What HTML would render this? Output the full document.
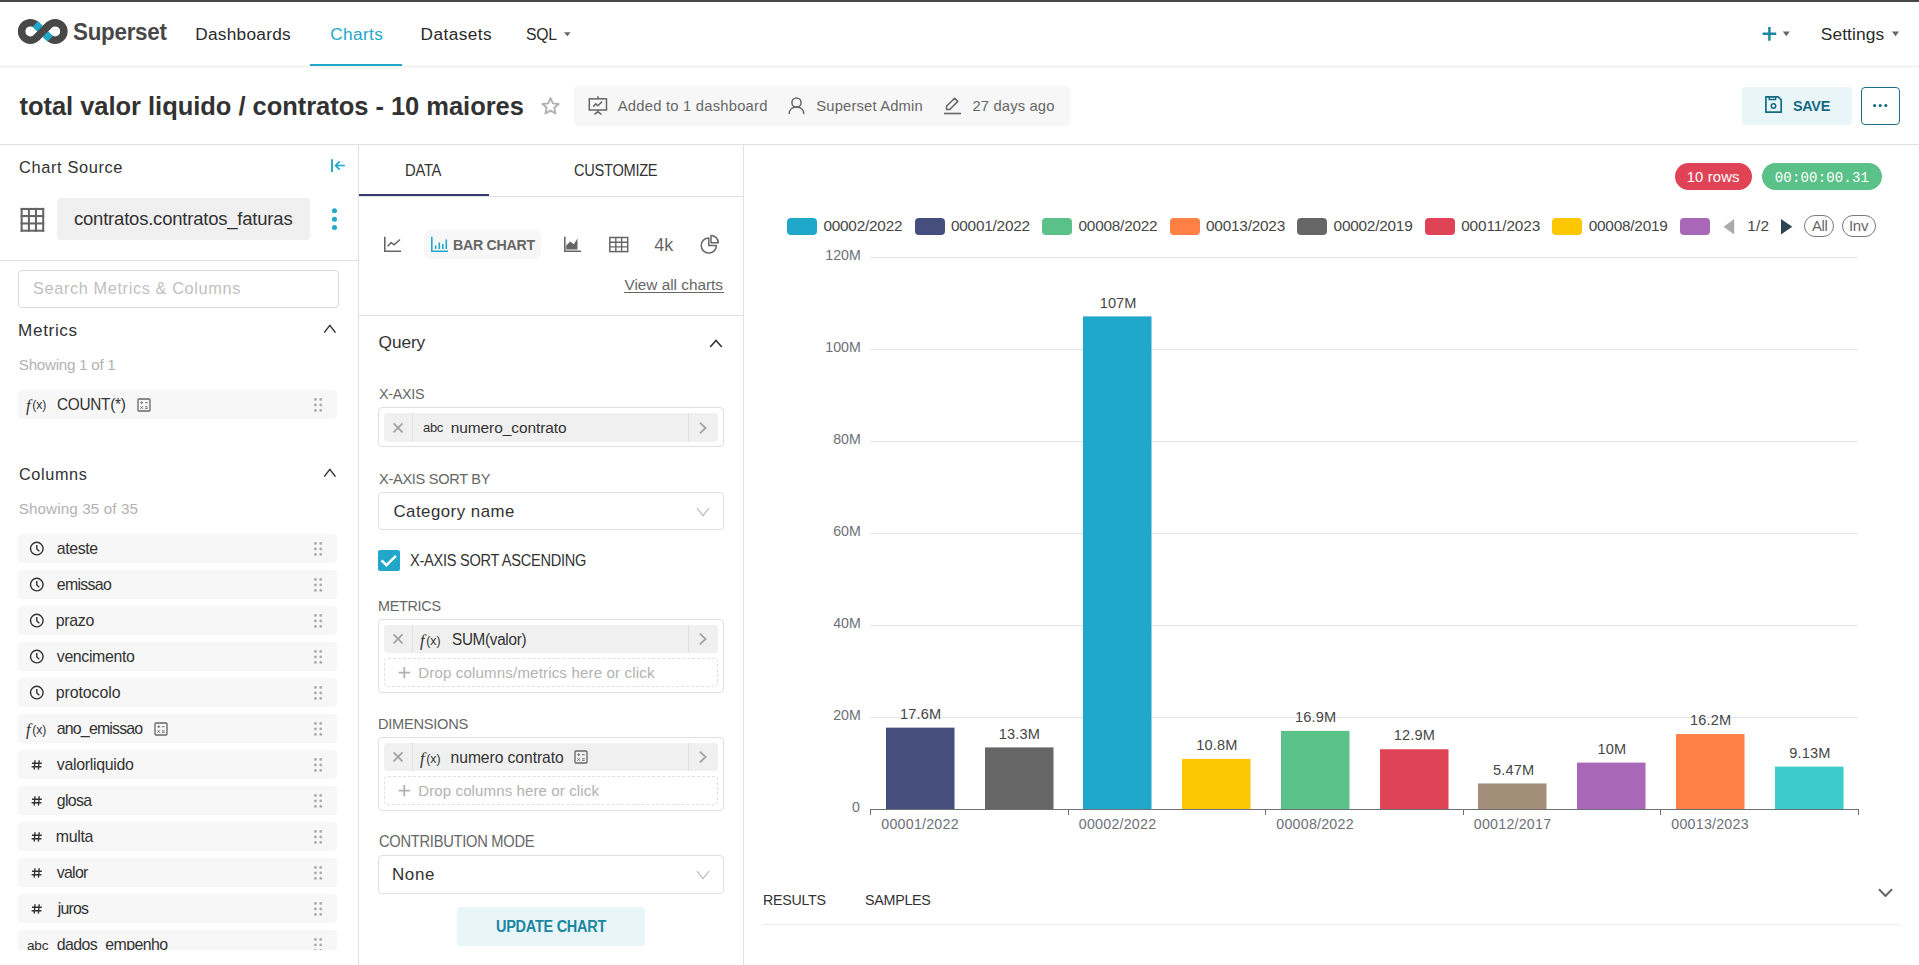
<!DOCTYPE html>
<html><head><meta charset="utf-8"><style>
html,body{margin:0;padding:0;background:#fff;}
body{width:1919px;height:965px;overflow:hidden;position:relative;font-family:"Liberation Sans",sans-serif;}
#root>div,#root>svg,#root>span{position:absolute;}
#root span{white-space:pre;}
#clip{position:absolute;left:0;top:0;width:358px;height:950px;overflow:hidden;}
</style></head><body><div id="root">
<div style="left:0px;top:0px;width:1919px;height:2px;background:#484848;"></div>
<div style="left:0px;top:65px;width:1919px;height:3px;background:#f5f5f5;"></div>
<div style="left:310px;top:64px;width:92px;height:2px;background:#20a7c9;"></div>
<svg style="left:0px;top:0px" width="80" height="60" viewBox="0 0 80 60">
<path d="M36.57 25.22 L48.93 37.58 A8.75 8.75 0 1 0 48.93 25.22 L36.57 37.58 A8.75 8.75 0 1 1 36.57 25.22 Z" fill="none" stroke="#484848" stroke-width="7.5" stroke-linejoin="round"/>
<path d="M35.3 23.95 L50.2 38.85" fill="none" stroke="#20a7c9" stroke-width="7.6"/>
<path d="M49.3 24.85 L36.2 37.95" fill="none" stroke="#484848" stroke-width="7.5"/>
</svg>
<svg style="left:563px;top:31px" width="9" height="6" viewBox="0 0 9 6"><path d="M1 1.2 L7.6 1.2 L4.3 5.2 Z" fill="#666"/></svg>
<svg style="left:1760px;top:25px" width="19" height="18" viewBox="0 0 19 18"><path d="M9.4 1.9 V15.7 M2.6 8.8 H16.2" stroke="#1a85a0" stroke-width="2.4" fill="none"/></svg>
<svg style="left:1782px;top:31px" width="9" height="6" viewBox="0 0 9 6"><path d="M0.8 0.6 L7.8 0.6 L4.3 5.2 Z" fill="#666"/></svg>
<svg style="left:1891px;top:31px" width="9" height="6" viewBox="0 0 9 6"><path d="M1 0.6 L8 0.6 L4.5 5.2 Z" fill="#666"/></svg>
<svg style="left:540px;top:96px" width="21" height="20" viewBox="0 0 21 20"><path d="M10.5 2.2 L12.9 7.4 L18.6 8 L14.3 11.8 L15.5 17.5 L10.5 14.6 L5.5 17.5 L6.7 11.8 L2.4 8 L8.1 7.4 Z" fill="none" stroke="#b2b2b2" stroke-width="1.9" stroke-linejoin="round"/></svg>
<div style="left:574px;top:86px;width:496px;height:40px;box-sizing:border-box;background:#f7f7f7;border-radius:4px"></div>
<svg style="left:587px;top:95px" width="22" height="22" viewBox="0 0 22 22"><rect x="2.3" y="3.85" width="17.2" height="11.15" fill="none" stroke="#666" stroke-width="1.5"/><path d="M10.9 1.3 V3.85 M10.9 15 V16.8 M7.4 19.4 L10.9 16.8 L14.4 19.4 M6.2 11.6 L8.9 8.9 L10.9 10.7 L15 6.6" fill="none" stroke="#666" stroke-width="1.5"/></svg>
<svg style="left:787px;top:96px" width="19" height="19" viewBox="0 0 19 19"><circle cx="9.5" cy="6.6" r="4.6" fill="none" stroke="#666" stroke-width="1.5"/><path d="M2.2 18 C2.2 13.5 5.5 11 9.5 11 C13.5 11 16.8 13.5 16.8 18" fill="none" stroke="#666" stroke-width="1.5"/></svg>
<svg style="left:942px;top:96px" width="21" height="19" viewBox="0 0 21 19"><path d="M4.5 13.5 L4.5 10.3 L12.6 2.2 L15.8 5.4 L7.7 13.5 Z" fill="none" stroke="#666" stroke-width="1.5" stroke-linejoin="round"/><path d="M2 17.5 H19" stroke="#666" stroke-width="1.6"/></svg>
<div style="left:1742px;top:87px;width:110px;height:38px;box-sizing:border-box;background:#e9f6f9;border-radius:4px"></div>
<svg style="left:1763px;top:95px" width="21" height="20" viewBox="0 0 21 20"><path d="M2.9 1.8 H15.2 L18.2 4.8 V17.2 H2.9 Z" fill="none" stroke="#156a82" stroke-width="1.7" stroke-linejoin="round"/><path d="M6.3 1.8 V4.6 H12.6 V1.8" fill="none" stroke="#156a82" stroke-width="1.5"/><circle cx="10.5" cy="11" r="2.2" fill="none" stroke="#156a82" stroke-width="1.5"/></svg>
<div style="left:1861px;top:87px;width:39px;height:38px;box-sizing:border-box;border:1px solid #1a6f87;border-radius:4px"></div>
<svg style="left:1870px;top:101px" width="20" height="9" viewBox="0 0 20 9"><circle cx="4.6" cy="4.5" r="1.6" fill="#156a82"/><circle cx="10.2" cy="4.5" r="1.6" fill="#156a82"/><circle cx="15.8" cy="4.5" r="1.6" fill="#156a82"/></svg>
<div style="left:0px;top:144px;width:1919px;height:1px;background:#e0e0e0;"></div>
<div style="left:358px;top:145px;width:1px;height:820px;background:#e0e0e0;"></div>
<div style="left:743px;top:145px;width:1px;height:820px;background:#e0e0e0;"></div>
<svg style="left:328px;top:156px" width="20" height="19" viewBox="0 0 20 19"><path d="M4 3.2 V15.9" stroke="#20a7c9" stroke-width="1.9"/><path d="M16.9 9.5 H7.6 M11.7 5.4 L7.6 9.5 L11.7 13.6" fill="none" stroke="#20a7c9" stroke-width="1.7"/></svg>
<svg style="left:0px;top:0px" width="50" height="240" viewBox="0 0 50 240"><path d="M21.65 207.9 V231.7" stroke="#666" stroke-width="2.05"/><path d="M28.9 207.9 V231.7" stroke="#666" stroke-width="2.05"/><path d="M35.95 207.9 V231.7" stroke="#666" stroke-width="2.05"/><path d="M43.2 207.9 V231.7" stroke="#666" stroke-width="2.05"/><path d="M20.6 208.95 H44.25" stroke="#666" stroke-width="2.05"/><path d="M20.6 216.05 H44.25" stroke="#666" stroke-width="2.05"/><path d="M20.6 223.45 H44.25" stroke="#666" stroke-width="2.05"/><path d="M20.6 230.7 H44.25" stroke="#666" stroke-width="2.05"/></svg>
<div style="left:57px;top:198px;width:253px;height:42px;box-sizing:border-box;background:#f0f0f0;border-radius:4px"></div>
<svg style="left:328px;top:205px" width="14" height="28" viewBox="0 0 14 28"><circle cx="6.5" cy="5.8" r="2.5" fill="#20a7c9"/><circle cx="6.5" cy="14.2" r="2.5" fill="#20a7c9"/><circle cx="6.5" cy="22.4" r="2.5" fill="#20a7c9"/></svg>
<div style="left:0px;top:260px;width:358px;height:1px;background:#e0e0e0;"></div>
<div style="left:18px;top:270px;width:321px;height:38px;box-sizing:border-box;border:1px solid #d9d9e6;border-radius:4px;background:#fff"></div>
<svg style="left:323.3px;top:324px" width="13.7" height="10.4" viewBox="0 0 13.7 10.4"><path d="M1.2 8.6 L6.85 1.4 L12.5 8.6" fill="none" stroke="#323232" stroke-width="1.5"/></svg>
<div style="left:18px;top:390px;width:319px;height:29px;box-sizing:border-box;background:#f7f7f7;border-radius:4px"></div>
<svg style="left:136.5px;top:397.5px" width="14" height="14" viewBox="0 0 14 14"><rect x="1" y="1" width="12" height="12" rx="1" fill="none" stroke="#666" stroke-width="1.3"/><path d="M3.3 4.7 H6.1 M4.7 3.3 V6.1 M8 4.7 H10.7 M3.4 8.2 L6 10.8 M6 8.2 L3.4 10.8 M8 8.8 H10.7 M8 10.4 H10.7" stroke="#666" stroke-width="0.9"/></svg>
<svg style="left:313.5px;top:397.5px" width="9" height="14" viewBox="0 0 9 14"><circle cx="1.4" cy="1.4" r="1.35" fill="#a8a8a8"/><circle cx="6.699999999999999" cy="1.4" r="1.35" fill="#a8a8a8"/><circle cx="1.4" cy="6.9" r="1.35" fill="#a8a8a8"/><circle cx="6.699999999999999" cy="6.9" r="1.35" fill="#a8a8a8"/><circle cx="1.4" cy="12.4" r="1.35" fill="#a8a8a8"/><circle cx="6.699999999999999" cy="12.4" r="1.35" fill="#a8a8a8"/></svg>
<svg style="left:323.3px;top:468px" width="13.7" height="10.4" viewBox="0 0 13.7 10.4"><path d="M1.2 8.6 L6.85 1.4 L12.5 8.6" fill="none" stroke="#323232" stroke-width="1.5"/></svg>
<div style="left:18px;top:534px;width:319px;height:29px;background:#f7f7f7;border-radius:4px"></div>
<svg style="left:29px;top:541px" width="16" height="16" viewBox="0 0 16 16"><circle cx="7.8" cy="7.6" r="6.3" fill="none" stroke="#323232" stroke-width="1.4"/><path d="M7.8 3.9 V7.9 L10.3 10.2" fill="none" stroke="#323232" stroke-width="1.4"/></svg>
<svg style="left:313.5px;top:541.5px" width="9" height="14" viewBox="0 0 9 14"><circle cx="1.4" cy="1.4" r="1.35" fill="#a8a8a8"/><circle cx="6.699999999999999" cy="1.4" r="1.35" fill="#a8a8a8"/><circle cx="1.4" cy="6.9" r="1.35" fill="#a8a8a8"/><circle cx="6.699999999999999" cy="6.9" r="1.35" fill="#a8a8a8"/><circle cx="1.4" cy="12.4" r="1.35" fill="#a8a8a8"/><circle cx="6.699999999999999" cy="12.4" r="1.35" fill="#a8a8a8"/></svg>
<div style="left:18px;top:570px;width:319px;height:29px;background:#f7f7f7;border-radius:4px"></div>
<svg style="left:29px;top:577px" width="16" height="16" viewBox="0 0 16 16"><circle cx="7.8" cy="7.6" r="6.3" fill="none" stroke="#323232" stroke-width="1.4"/><path d="M7.8 3.9 V7.9 L10.3 10.2" fill="none" stroke="#323232" stroke-width="1.4"/></svg>
<svg style="left:313.5px;top:577.5px" width="9" height="14" viewBox="0 0 9 14"><circle cx="1.4" cy="1.4" r="1.35" fill="#a8a8a8"/><circle cx="6.699999999999999" cy="1.4" r="1.35" fill="#a8a8a8"/><circle cx="1.4" cy="6.9" r="1.35" fill="#a8a8a8"/><circle cx="6.699999999999999" cy="6.9" r="1.35" fill="#a8a8a8"/><circle cx="1.4" cy="12.4" r="1.35" fill="#a8a8a8"/><circle cx="6.699999999999999" cy="12.4" r="1.35" fill="#a8a8a8"/></svg>
<div style="left:18px;top:606px;width:319px;height:29px;background:#f7f7f7;border-radius:4px"></div>
<svg style="left:29px;top:613px" width="16" height="16" viewBox="0 0 16 16"><circle cx="7.8" cy="7.6" r="6.3" fill="none" stroke="#323232" stroke-width="1.4"/><path d="M7.8 3.9 V7.9 L10.3 10.2" fill="none" stroke="#323232" stroke-width="1.4"/></svg>
<svg style="left:313.5px;top:613.5px" width="9" height="14" viewBox="0 0 9 14"><circle cx="1.4" cy="1.4" r="1.35" fill="#a8a8a8"/><circle cx="6.699999999999999" cy="1.4" r="1.35" fill="#a8a8a8"/><circle cx="1.4" cy="6.9" r="1.35" fill="#a8a8a8"/><circle cx="6.699999999999999" cy="6.9" r="1.35" fill="#a8a8a8"/><circle cx="1.4" cy="12.4" r="1.35" fill="#a8a8a8"/><circle cx="6.699999999999999" cy="12.4" r="1.35" fill="#a8a8a8"/></svg>
<div style="left:18px;top:642px;width:319px;height:29px;background:#f7f7f7;border-radius:4px"></div>
<svg style="left:29px;top:649px" width="16" height="16" viewBox="0 0 16 16"><circle cx="7.8" cy="7.6" r="6.3" fill="none" stroke="#323232" stroke-width="1.4"/><path d="M7.8 3.9 V7.9 L10.3 10.2" fill="none" stroke="#323232" stroke-width="1.4"/></svg>
<svg style="left:313.5px;top:649.5px" width="9" height="14" viewBox="0 0 9 14"><circle cx="1.4" cy="1.4" r="1.35" fill="#a8a8a8"/><circle cx="6.699999999999999" cy="1.4" r="1.35" fill="#a8a8a8"/><circle cx="1.4" cy="6.9" r="1.35" fill="#a8a8a8"/><circle cx="6.699999999999999" cy="6.9" r="1.35" fill="#a8a8a8"/><circle cx="1.4" cy="12.4" r="1.35" fill="#a8a8a8"/><circle cx="6.699999999999999" cy="12.4" r="1.35" fill="#a8a8a8"/></svg>
<div style="left:18px;top:678px;width:319px;height:29px;background:#f7f7f7;border-radius:4px"></div>
<svg style="left:29px;top:685px" width="16" height="16" viewBox="0 0 16 16"><circle cx="7.8" cy="7.6" r="6.3" fill="none" stroke="#323232" stroke-width="1.4"/><path d="M7.8 3.9 V7.9 L10.3 10.2" fill="none" stroke="#323232" stroke-width="1.4"/></svg>
<svg style="left:313.5px;top:685.5px" width="9" height="14" viewBox="0 0 9 14"><circle cx="1.4" cy="1.4" r="1.35" fill="#a8a8a8"/><circle cx="6.699999999999999" cy="1.4" r="1.35" fill="#a8a8a8"/><circle cx="1.4" cy="6.9" r="1.35" fill="#a8a8a8"/><circle cx="6.699999999999999" cy="6.9" r="1.35" fill="#a8a8a8"/><circle cx="1.4" cy="12.4" r="1.35" fill="#a8a8a8"/><circle cx="6.699999999999999" cy="12.4" r="1.35" fill="#a8a8a8"/></svg>
<div style="left:18px;top:714px;width:319px;height:29px;background:#f7f7f7;border-radius:4px"></div>
<svg style="left:154.3px;top:721.5px" width="14" height="14" viewBox="0 0 14 14"><rect x="1" y="1" width="12" height="12" rx="1" fill="none" stroke="#666" stroke-width="1.3"/><path d="M3.3 4.7 H6.1 M4.7 3.3 V6.1 M8 4.7 H10.7 M3.4 8.2 L6 10.8 M6 8.2 L3.4 10.8 M8 8.8 H10.7 M8 10.4 H10.7" stroke="#666" stroke-width="0.9"/></svg>
<svg style="left:313.5px;top:721.5px" width="9" height="14" viewBox="0 0 9 14"><circle cx="1.4" cy="1.4" r="1.35" fill="#a8a8a8"/><circle cx="6.699999999999999" cy="1.4" r="1.35" fill="#a8a8a8"/><circle cx="1.4" cy="6.9" r="1.35" fill="#a8a8a8"/><circle cx="6.699999999999999" cy="6.9" r="1.35" fill="#a8a8a8"/><circle cx="1.4" cy="12.4" r="1.35" fill="#a8a8a8"/><circle cx="6.699999999999999" cy="12.4" r="1.35" fill="#a8a8a8"/></svg>
<div style="left:18px;top:750px;width:319px;height:29px;background:#f7f7f7;border-radius:4px"></div>
<svg style="left:30px;top:758px" width="14" height="14" viewBox="0 0 14 14"><path d="M5 2.2 L4.2 11.6 M9.2 2.2 L8.4 11.6 M2 5.2 H11.8 M1.6 8.7 H11.4" stroke="#323232" stroke-width="1.35" fill="none"/></svg>
<svg style="left:313.5px;top:757.5px" width="9" height="14" viewBox="0 0 9 14"><circle cx="1.4" cy="1.4" r="1.35" fill="#a8a8a8"/><circle cx="6.699999999999999" cy="1.4" r="1.35" fill="#a8a8a8"/><circle cx="1.4" cy="6.9" r="1.35" fill="#a8a8a8"/><circle cx="6.699999999999999" cy="6.9" r="1.35" fill="#a8a8a8"/><circle cx="1.4" cy="12.4" r="1.35" fill="#a8a8a8"/><circle cx="6.699999999999999" cy="12.4" r="1.35" fill="#a8a8a8"/></svg>
<div style="left:18px;top:786px;width:319px;height:29px;background:#f7f7f7;border-radius:4px"></div>
<svg style="left:30px;top:794px" width="14" height="14" viewBox="0 0 14 14"><path d="M5 2.2 L4.2 11.6 M9.2 2.2 L8.4 11.6 M2 5.2 H11.8 M1.6 8.7 H11.4" stroke="#323232" stroke-width="1.35" fill="none"/></svg>
<svg style="left:313.5px;top:793.5px" width="9" height="14" viewBox="0 0 9 14"><circle cx="1.4" cy="1.4" r="1.35" fill="#a8a8a8"/><circle cx="6.699999999999999" cy="1.4" r="1.35" fill="#a8a8a8"/><circle cx="1.4" cy="6.9" r="1.35" fill="#a8a8a8"/><circle cx="6.699999999999999" cy="6.9" r="1.35" fill="#a8a8a8"/><circle cx="1.4" cy="12.4" r="1.35" fill="#a8a8a8"/><circle cx="6.699999999999999" cy="12.4" r="1.35" fill="#a8a8a8"/></svg>
<div style="left:18px;top:822px;width:319px;height:29px;background:#f7f7f7;border-radius:4px"></div>
<svg style="left:30px;top:830px" width="14" height="14" viewBox="0 0 14 14"><path d="M5 2.2 L4.2 11.6 M9.2 2.2 L8.4 11.6 M2 5.2 H11.8 M1.6 8.7 H11.4" stroke="#323232" stroke-width="1.35" fill="none"/></svg>
<svg style="left:313.5px;top:829.5px" width="9" height="14" viewBox="0 0 9 14"><circle cx="1.4" cy="1.4" r="1.35" fill="#a8a8a8"/><circle cx="6.699999999999999" cy="1.4" r="1.35" fill="#a8a8a8"/><circle cx="1.4" cy="6.9" r="1.35" fill="#a8a8a8"/><circle cx="6.699999999999999" cy="6.9" r="1.35" fill="#a8a8a8"/><circle cx="1.4" cy="12.4" r="1.35" fill="#a8a8a8"/><circle cx="6.699999999999999" cy="12.4" r="1.35" fill="#a8a8a8"/></svg>
<div style="left:18px;top:858px;width:319px;height:29px;background:#f7f7f7;border-radius:4px"></div>
<svg style="left:30px;top:866px" width="14" height="14" viewBox="0 0 14 14"><path d="M5 2.2 L4.2 11.6 M9.2 2.2 L8.4 11.6 M2 5.2 H11.8 M1.6 8.7 H11.4" stroke="#323232" stroke-width="1.35" fill="none"/></svg>
<svg style="left:313.5px;top:865.5px" width="9" height="14" viewBox="0 0 9 14"><circle cx="1.4" cy="1.4" r="1.35" fill="#a8a8a8"/><circle cx="6.699999999999999" cy="1.4" r="1.35" fill="#a8a8a8"/><circle cx="1.4" cy="6.9" r="1.35" fill="#a8a8a8"/><circle cx="6.699999999999999" cy="6.9" r="1.35" fill="#a8a8a8"/><circle cx="1.4" cy="12.4" r="1.35" fill="#a8a8a8"/><circle cx="6.699999999999999" cy="12.4" r="1.35" fill="#a8a8a8"/></svg>
<div style="left:18px;top:894px;width:319px;height:29px;background:#f7f7f7;border-radius:4px"></div>
<svg style="left:30px;top:902px" width="14" height="14" viewBox="0 0 14 14"><path d="M5 2.2 L4.2 11.6 M9.2 2.2 L8.4 11.6 M2 5.2 H11.8 M1.6 8.7 H11.4" stroke="#323232" stroke-width="1.35" fill="none"/></svg>
<svg style="left:313.5px;top:901.5px" width="9" height="14" viewBox="0 0 9 14"><circle cx="1.4" cy="1.4" r="1.35" fill="#a8a8a8"/><circle cx="6.699999999999999" cy="1.4" r="1.35" fill="#a8a8a8"/><circle cx="1.4" cy="6.9" r="1.35" fill="#a8a8a8"/><circle cx="6.699999999999999" cy="6.9" r="1.35" fill="#a8a8a8"/><circle cx="1.4" cy="12.4" r="1.35" fill="#a8a8a8"/><circle cx="6.699999999999999" cy="12.4" r="1.35" fill="#a8a8a8"/></svg>
<div style="left:18px;top:930px;width:319px;height:29px;background:#f7f7f7;border-radius:4px"></div>
<svg style="left:313.5px;top:937.5px" width="9" height="14" viewBox="0 0 9 14"><circle cx="1.4" cy="1.4" r="1.35" fill="#a8a8a8"/><circle cx="6.699999999999999" cy="1.4" r="1.35" fill="#a8a8a8"/><circle cx="1.4" cy="6.9" r="1.35" fill="#a8a8a8"/><circle cx="6.699999999999999" cy="6.9" r="1.35" fill="#a8a8a8"/><circle cx="1.4" cy="12.4" r="1.35" fill="#a8a8a8"/><circle cx="6.699999999999999" cy="12.4" r="1.35" fill="#a8a8a8"/></svg>
<div style="left:359px;top:196px;width:384px;height:1px;background:#e0e0e0;"></div>
<div style="left:359px;top:194px;width:130px;height:2px;background:#323d6b;"></div>
<svg style="left:383px;top:235px" width="20" height="19" viewBox="0 0 20 19"><path d="M1.8 1.8 V16.2 H18" fill="none" stroke="#666" stroke-width="1.6"/><path d="M4.6 11.2 L8.2 7.6 L11.2 9.8 L17 4.5" fill="none" stroke="#666" stroke-width="1.5"/></svg>
<div style="left:424px;top:230px;width:117px;height:29px;box-sizing:border-box;background:#f7f7f7;border-radius:6px"></div>
<svg style="left:430px;top:235px" width="20" height="19" viewBox="0 0 20 19"><path d="M1.8 1.8 V16.2 H18" fill="none" stroke="#20a7c9" stroke-width="1.6"/><path d="M5.7 10.5 V14 M9.3 7.5 V14 M12.8 9 V14 M16.3 4.5 V14" stroke="#20a7c9" stroke-width="1.6"/></svg>
<svg style="left:563px;top:235px" width="20" height="19" viewBox="0 0 20 19"><path d="M1.8 1.8 V16.2 H18" fill="none" stroke="#666" stroke-width="1.6"/><path d="M3.2 14.6 V10.5 L7.2 6.5 L10.8 9.3 L14.5 3.5 V14.6 Z" fill="#666"/></svg>
<svg style="left:608px;top:235px" width="22" height="19" viewBox="0 0 22 19"><rect x="1.8" y="2.5" width="17.9" height="14.1" fill="none" stroke="#666" stroke-width="1.5"/><path d="M7.8 2.5 V16.6 M13.6 2.5 V16.6 M1.8 7.2 H19.7 M1.8 11.9 H19.7" stroke="#666" stroke-width="1.4"/></svg>
<svg style="left:699px;top:233px" width="22" height="22" viewBox="0 0 22 22"><path d="M9.8 4.9 A7.6 7.6 0 1 0 17.4 12.5 H9.8 Z" fill="none" stroke="#666" stroke-width="1.5" stroke-linejoin="round"/><path d="M12 2.5 A7.3 7.3 0 0 1 19.3 9.8 H12 Z" fill="none" stroke="#666" stroke-width="1.5" stroke-linejoin="round"/></svg>
<div style="left:624px;top:292px;width:100px;height:1px;background:#666;"></div>
<div style="left:359px;top:315px;width:384px;height:1px;background:#e0e0e0;"></div>
<svg style="left:709.3px;top:338.6px" width="14" height="9.9" viewBox="0 0 14 9.9"><path d="M1.2 8.1 L7.0 1.4 L12.8 8.1" fill="none" stroke="#323232" stroke-width="1.5"/></svg>
<div style="left:378px;top:407px;width:346px;height:40px;box-sizing:border-box;border:1px solid #e0e0e0;border-radius:4px"></div>
<div style="left:384px;top:413px;width:334px;height:29px;box-sizing:border-box;background:#f0f0f0;border-radius:4px"></div>
<div style="left:412px;top:413px;width:1px;height:29px;background:#e0e0e0;"></div>
<div style="left:688px;top:413px;width:1px;height:29px;background:#e0e0e0;"></div>
<svg style="left:391px;top:420.5px" width="14" height="14" viewBox="0 0 14 14"><path d="M2.6 2.4 L11.5 11.3 M11.5 2.4 L2.6 11.3" stroke="#a3a3a3" stroke-width="1.8"/></svg>
<svg style="left:697px;top:420.5px" width="12" height="14" viewBox="0 0 12 14"><path d="M2.8 1.6 L8.6 7 L2.8 12.4" fill="none" stroke="#a3a3a3" stroke-width="1.8"/></svg>
<div style="left:378px;top:492px;width:346px;height:38px;box-sizing:border-box;border:1px solid #e0e0e0;border-radius:4px"></div>
<svg style="left:696px;top:507px" width="14" height="10" viewBox="0 0 14 10"><path d="M1 1.2 L7.0 8.6 L13 1.2" fill="none" stroke="#bfbfbf" stroke-width="1.3"/></svg>
<div style="left:378px;top:550px;width:21.5px;height:21px;box-sizing:border-box;background:#20a7c9;border-radius:2px"></div>
<svg style="left:378px;top:550px" width="22" height="21" viewBox="0 0 22 21"><path d="M3.6 10.4 L8.4 15.2 L17.9 5.8" fill="none" stroke="#fff" stroke-width="2.4"/></svg>
<div style="left:378px;top:619px;width:346px;height:74px;box-sizing:border-box;border:1px solid #e0e0e0;border-radius:4px"></div>
<div style="left:384px;top:625px;width:334px;height:28px;box-sizing:border-box;background:#f0f0f0;border-radius:4px"></div>
<div style="left:412px;top:625px;width:1px;height:28px;background:#e0e0e0;"></div>
<div style="left:688px;top:625px;width:1px;height:28px;background:#e0e0e0;"></div>
<svg style="left:391px;top:632.0px" width="14" height="14" viewBox="0 0 14 14"><path d="M2.6 2.4 L11.5 11.3 M11.5 2.4 L2.6 11.3" stroke="#a3a3a3" stroke-width="1.8"/></svg>
<svg style="left:697px;top:632.0px" width="12" height="14" viewBox="0 0 12 14"><path d="M2.8 1.6 L8.6 7 L2.8 12.4" fill="none" stroke="#a3a3a3" stroke-width="1.8"/></svg>
<div style="left:384px;top:658px;width:334px;height:29px;box-sizing:border-box;border:1px dashed #e0e0e0;border-radius:4px"></div>
<svg style="left:396px;top:665px" width="16" height="16" viewBox="0 0 16 16"><path d="M8.3 1.9 V13.3 M2.6 7.6 H14" stroke="#b2b2b2" stroke-width="1.8"/></svg>
<div style="left:378px;top:737px;width:346px;height:74px;box-sizing:border-box;border:1px solid #e0e0e0;border-radius:4px"></div>
<div style="left:384px;top:743px;width:334px;height:28px;box-sizing:border-box;background:#f0f0f0;border-radius:4px"></div>
<div style="left:412px;top:743px;width:1px;height:28px;background:#e0e0e0;"></div>
<div style="left:688px;top:743px;width:1px;height:28px;background:#e0e0e0;"></div>
<svg style="left:391px;top:750.0px" width="14" height="14" viewBox="0 0 14 14"><path d="M2.6 2.4 L11.5 11.3 M11.5 2.4 L2.6 11.3" stroke="#a3a3a3" stroke-width="1.8"/></svg>
<svg style="left:697px;top:750.0px" width="12" height="14" viewBox="0 0 12 14"><path d="M2.8 1.6 L8.6 7 L2.8 12.4" fill="none" stroke="#a3a3a3" stroke-width="1.8"/></svg>
<svg style="left:574px;top:750px" width="14" height="14" viewBox="0 0 14 14"><rect x="1" y="1" width="12" height="12" rx="1" fill="none" stroke="#666" stroke-width="1.3"/><path d="M3.3 4.7 H6.1 M4.7 3.3 V6.1 M8 4.7 H10.7 M3.4 8.2 L6 10.8 M6 8.2 L3.4 10.8 M8 8.8 H10.7 M8 10.4 H10.7" stroke="#666" stroke-width="0.9"/></svg>
<div style="left:384px;top:776px;width:334px;height:29px;box-sizing:border-box;border:1px dashed #e0e0e0;border-radius:4px"></div>
<svg style="left:396px;top:783px" width="16" height="16" viewBox="0 0 16 16"><path d="M8.3 1.9 V13.3 M2.6 7.6 H14" stroke="#b2b2b2" stroke-width="1.8"/></svg>
<div style="left:378px;top:855px;width:346px;height:39px;box-sizing:border-box;border:1px solid #e0e0e0;border-radius:4px"></div>
<svg style="left:696px;top:869.5px" width="14" height="10" viewBox="0 0 14 10"><path d="M1 1.2 L7.0 8.6 L13 1.2" fill="none" stroke="#bfbfbf" stroke-width="1.3"/></svg>
<div style="left:457px;top:907px;width:188px;height:39px;box-sizing:border-box;background:#e9f6f9;border-radius:4px"></div>
<div style="left:1675px;top:163px;width:77px;height:27px;box-sizing:border-box;background:#e04355;border-radius:14px"></div>
<div style="left:1762px;top:163px;width:120px;height:27px;box-sizing:border-box;background:#5ac189;border-radius:14px"></div>
<div style="left:787.0px;top:218px;width:30px;height:16.5px;box-sizing:border-box;background:#1fa8c9;border-radius:4px"></div>
<div style="left:914.5px;top:218px;width:30px;height:16.5px;box-sizing:border-box;background:#454e7c;border-radius:4px"></div>
<div style="left:1042.1px;top:218px;width:30px;height:16.5px;box-sizing:border-box;background:#5ac189;border-radius:4px"></div>
<div style="left:1169.7px;top:218px;width:30px;height:16.5px;box-sizing:border-box;background:#ff7f44;border-radius:4px"></div>
<div style="left:1297.2px;top:218px;width:30px;height:16.5px;box-sizing:border-box;background:#666666;border-radius:4px"></div>
<div style="left:1424.8px;top:218px;width:30px;height:16.5px;box-sizing:border-box;background:#e04355;border-radius:4px"></div>
<div style="left:1552.3px;top:218px;width:30px;height:16.5px;box-sizing:border-box;background:#fcc700;border-radius:4px"></div>
<div style="left:1679.8px;top:218px;width:30px;height:16.5px;box-sizing:border-box;background:#a868b7;border-radius:4px"></div>
<svg style="left:1722px;top:217px" width="14" height="20" viewBox="0 0 14 20"><path d="M12.2 2 V17.6 L1.5 9.8 Z" fill="#aaa"/></svg>
<svg style="left:1779px;top:217px" width="15" height="20" viewBox="0 0 15 20"><path d="M2 2 V17.6 L13.3 9.8 Z" fill="#2f4554"/></svg>
<div style="left:1804.4px;top:215.2px;width:29.6px;height:22.3px;box-sizing:border-box;border:1.1px solid #7a7a7a;border-radius:11px"></div>
<div style="left:1842.3px;top:215.2px;width:33.3px;height:22.3px;box-sizing:border-box;border:1.1px solid #7a7a7a;border-radius:11px"></div>
<div style="left:870px;top:717.0px;width:988px;height:1px;background:#e0e6f1;"></div>
<div style="left:870px;top:625.0px;width:988px;height:1px;background:#e0e6f1;"></div>
<div style="left:870px;top:533.0px;width:988px;height:1px;background:#e0e6f1;"></div>
<div style="left:870px;top:441.0px;width:988px;height:1px;background:#e0e6f1;"></div>
<div style="left:870px;top:349.0px;width:988px;height:1px;background:#e0e6f1;"></div>
<div style="left:870px;top:257.0px;width:988px;height:1px;background:#e0e6f1;"></div>
<div style="left:870px;top:809px;width:988.5px;height:1.4px;background:#6e7079;"></div>
<div style="left:870.0px;top:809px;width:1.3px;height:5.5px;background:#6e7079;"></div>
<div style="left:1067.5px;top:809px;width:1.3px;height:5.5px;background:#6e7079;"></div>
<div style="left:1265.0px;top:809px;width:1.3px;height:5.5px;background:#6e7079;"></div>
<div style="left:1462.5px;top:809px;width:1.3px;height:5.5px;background:#6e7079;"></div>
<div style="left:1660.0px;top:809px;width:1.3px;height:5.5px;background:#6e7079;"></div>
<div style="left:1857.5px;top:809px;width:1.3px;height:5.5px;background:#6e7079;"></div>
<svg style="left:885.75px;top:0px" width="69" height="811" viewBox="0 0 69 811"><rect x="0" y="727.64" width="68.5" height="81.36" fill="#454e7c"/></svg>
<svg style="left:984.5px;top:0px" width="69" height="811" viewBox="0 0 69 811"><rect x="0" y="747.42" width="68.5" height="61.58" fill="#666666"/></svg>
<svg style="left:1083.25px;top:0px" width="69" height="811" viewBox="0 0 69 811"><rect x="0" y="316.40" width="68.5" height="492.60" fill="#1fa8c9"/></svg>
<svg style="left:1182.0px;top:0px" width="69" height="811" viewBox="0 0 69 811"><rect x="0" y="758.92" width="68.5" height="50.08" fill="#fcc700"/></svg>
<svg style="left:1280.75px;top:0px" width="69" height="811" viewBox="0 0 69 811"><rect x="0" y="730.86" width="68.5" height="78.14" fill="#5ac189"/></svg>
<svg style="left:1379.5px;top:0px" width="69" height="811" viewBox="0 0 69 811"><rect x="0" y="749.26" width="68.5" height="59.74" fill="#e04355"/></svg>
<svg style="left:1478.25px;top:0px" width="69" height="811" viewBox="0 0 69 811"><rect x="0" y="783.44" width="68.5" height="25.56" fill="#a38f79"/></svg>
<svg style="left:1577.0px;top:0px" width="69" height="811" viewBox="0 0 69 811"><rect x="0" y="762.60" width="68.5" height="46.40" fill="#a868b7"/></svg>
<svg style="left:1675.75px;top:0px" width="69" height="811" viewBox="0 0 69 811"><rect x="0" y="734.08" width="68.5" height="74.92" fill="#ff7f44"/></svg>
<svg style="left:1774.5px;top:0px" width="69" height="811" viewBox="0 0 69 811"><rect x="0" y="766.60" width="68.5" height="42.40" fill="#3ccccb"/></svg>
<div style="left:763px;top:924px;width:1137px;height:1px;background:#ececec;"></div>
<svg style="left:1878px;top:887.6px" width="15" height="9.4" viewBox="0 0 15 9.4"><path d="M1 1.2 L7.5 8.0 L14 1.2" fill="none" stroke="#666" stroke-width="2"/></svg>
<span style="left:73.10px;top:20.00px;font:700 24.49px/24.49px 'Liberation Sans';color:#484848;letter-spacing:-0.300px;transform:scaleX(0.9149);transform-origin:0 0;">Superset</span>
<span style="left:195.25px;top:26.00px;font:400 17.25px/17.25px 'Liberation Sans';color:#2a2a2a;letter-spacing:0.262px;">Dashboards</span>
<span style="left:330.20px;top:26.00px;font:400 17.25px/17.25px 'Liberation Sans';color:#20a7c9;letter-spacing:0.384px;">Charts</span>
<span style="left:420.60px;top:26.00px;font:400 17.25px/17.25px 'Liberation Sans';color:#2a2a2a;letter-spacing:0.422px;">Datasets</span>
<span style="left:525.70px;top:26.00px;font:400 17.25px/17.25px 'Liberation Sans';color:#2a2a2a;letter-spacing:-0.300px;transform:scaleX(0.9119);transform-origin:0 0;">SQL</span>
<span style="left:1820.70px;top:25.90px;font:400 17.39px/17.39px 'Liberation Sans';color:#2a2a2a;letter-spacing:0.115px;">Settings</span>
<span style="left:19.50px;top:93.70px;font:700 25.51px/25.51px 'Liberation Sans';color:#323232;letter-spacing:-0.034px;">total valor liquido / contratos - 10 maiores</span>
<span style="left:617.80px;top:99.40px;font:400 14.78px/14.78px 'Liberation Sans';color:#666;letter-spacing:0.226px;">Added to 1 dashboard</span>
<span style="left:816.30px;top:99.40px;font:400 14.78px/14.78px 'Liberation Sans';color:#666;letter-spacing:0.166px;">Superset Admin</span>
<span style="left:972.50px;top:99.40px;font:400 14.78px/14.78px 'Liberation Sans';color:#666;letter-spacing:0.146px;">27 days ago</span>
<span style="left:1793.00px;top:97.80px;font:700 15.36px/15.36px 'Liberation Sans';color:#156a82;letter-spacing:-0.300px;transform:scaleX(0.9357);transform-origin:0 0;">SAVE</span>
<span style="left:18.80px;top:159.60px;font:400 15.94px/15.94px 'Liberation Sans';color:#323232;letter-spacing:0.600px;transform:scaleX(1.0295);transform-origin:0 0;">Chart Source</span>
<span style="left:74.00px;top:210.00px;font:400 18.49px/18.49px 'Liberation Sans';color:#323232;letter-spacing:-0.206px;">contratos.contratos_faturas</span>
<span style="left:33.10px;top:281.40px;font:400 15.8px/15.8px 'Liberation Sans';color:#bfbfbf;letter-spacing:0.600px;transform:scaleX(1.0324);transform-origin:0 0;">Search Metrics &amp; Columns</span>
<span style="left:17.71px;top:322.70px;font:400 15.8px/15.8px 'Liberation Sans';color:#323232;letter-spacing:0.600px;transform:scaleX(1.0858);transform-origin:0 0;">Metrics</span>
<span style="left:18.80px;top:356.70px;font:400 15.22px/15.22px 'Liberation Sans';color:#b2b2b2;letter-spacing:-0.286px;">Showing 1 of 1</span>
<span style="left:26.00px;top:397.50px;font:400 16.5px/16.5px 'Liberation Serif';color:#323232;letter-spacing:0.000px;font-style:italic">f</span>
<span style="left:32.20px;top:399.30px;font:400 12.2px/12.2px 'Liberation Sans';color:#323232;letter-spacing:0.000px;">(x)</span>
<span style="left:56.90px;top:395.90px;font:400 16.09px/16.09px 'Liberation Sans';color:#323232;letter-spacing:-0.300px;transform:scaleX(0.9557);transform-origin:0 0;">COUNT(*)</span>
<span style="left:18.70px;top:465.50px;font:400 16.09px/16.09px 'Liberation Sans';color:#323232;letter-spacing:0.600px;transform:scaleX(1.0119);transform-origin:0 0;">Columns</span>
<span style="left:18.70px;top:500.80px;font:400 15.22px/15.22px 'Liberation Sans';color:#b2b2b2;letter-spacing:0.117px;">Showing 35 of 35</span>
<span style="left:56.80px;top:541.20px;font:400 15.9px/15.9px 'Liberation Sans';color:#323232;letter-spacing:-0.410px;">ateste</span>
<span style="left:56.80px;top:577.20px;font:400 15.9px/15.9px 'Liberation Sans';color:#323232;letter-spacing:-0.689px;">emissao</span>
<span style="left:55.80px;top:613.20px;font:400 15.9px/15.9px 'Liberation Sans';color:#323232;letter-spacing:-0.303px;">prazo</span>
<span style="left:56.80px;top:649.20px;font:400 15.9px/15.9px 'Liberation Sans';color:#323232;letter-spacing:-0.358px;">vencimento</span>
<span style="left:55.80px;top:685.20px;font:400 15.9px/15.9px 'Liberation Sans';color:#323232;letter-spacing:-0.079px;">protocolo</span>
<span style="left:56.80px;top:721.20px;font:400 15.9px/15.9px 'Liberation Sans';color:#323232;letter-spacing:-0.818px;">ano_emissao</span>
<span style="left:26.00px;top:721.80px;font:400 16.5px/16.5px 'Liberation Serif';color:#323232;letter-spacing:0.000px;font-style:italic">f</span>
<span style="left:32.20px;top:723.60px;font:400 12.2px/12.2px 'Liberation Sans';color:#323232;letter-spacing:0.000px;">(x)</span>
<span style="left:56.80px;top:757.20px;font:400 15.9px/15.9px 'Liberation Sans';color:#323232;letter-spacing:-0.304px;">valorliquido</span>
<span style="left:56.80px;top:793.20px;font:400 15.9px/15.9px 'Liberation Sans';color:#323232;letter-spacing:-0.688px;">glosa</span>
<span style="left:55.80px;top:829.20px;font:400 15.9px/15.9px 'Liberation Sans';color:#323232;letter-spacing:-0.330px;">multa</span>
<span style="left:56.80px;top:865.20px;font:400 15.9px/15.9px 'Liberation Sans';color:#323232;letter-spacing:-0.738px;">valor</span>
<span style="left:57.80px;top:901.20px;font:400 15.9px/15.9px 'Liberation Sans';color:#323232;letter-spacing:-0.824px;">juros</span>
<span style="left:56.80px;top:937.20px;font:400 15.9px/15.9px 'Liberation Sans';color:#323232;letter-spacing:-0.597px;">dados_empenho</span>
<span style="left:27.00px;top:938.90px;font:400 13.6px/13.6px 'Liberation Sans';color:#323232;letter-spacing:-0.200px;">abc</span>
<span style="left:404.86px;top:163.10px;font:400 15.8px/15.8px 'Liberation Sans';color:#323232;letter-spacing:-0.300px;transform:scaleX(0.9362);transform-origin:0 0;">DATA</span>
<span style="left:574.20px;top:163.10px;font:400 15.8px/15.8px 'Liberation Sans';color:#323232;letter-spacing:-0.300px;transform:scaleX(0.9254);transform-origin:0 0;">CUSTOMIZE</span>
<span style="left:452.78px;top:236.70px;font:700 15.51px/15.51px 'Liberation Sans';color:#666;letter-spacing:-0.300px;transform:scaleX(0.9164);transform-origin:0 0;">BAR CHART</span>
<span style="left:654.20px;top:236.70px;font:400 17.97px/17.97px 'Liberation Sans';color:#666;letter-spacing:0.115px;">4k</span>
<span style="left:624.50px;top:276.80px;font:400 15.36px/15.36px 'Liberation Sans';color:#666;letter-spacing:-0.019px;">View all charts</span>
<span style="left:378.60px;top:333.90px;font:400 17.25px/17.25px 'Liberation Sans';color:#323232;letter-spacing:-0.087px;">Query</span>
<span style="left:378.60px;top:386.70px;font:400 14.64px/14.64px 'Liberation Sans';color:#666;letter-spacing:-0.300px;transform:scaleX(0.9829);transform-origin:0 0;">X-AXIS</span>
<span style="left:422.50px;top:421.00px;font:400 13.15px/13.15px 'Liberation Sans';color:#323232;letter-spacing:-0.300px;transform:scaleX(0.9849);transform-origin:0 0;">abc</span>
<span style="left:450.70px;top:419.70px;font:400 15.47px/15.47px 'Liberation Sans';color:#323232;letter-spacing:-0.074px;">numero_contrato</span>
<span style="left:378.50px;top:470.60px;font:400 15.36px/15.36px 'Liberation Sans';color:#666;letter-spacing:-0.300px;transform:scaleX(0.9479);transform-origin:0 0;">X-AXIS SORT BY</span>
<span style="left:393.40px;top:504.00px;font:400 16.81px/16.81px 'Liberation Sans';color:#323232;letter-spacing:0.509px;">Category name</span>
<span style="left:409.80px;top:553.10px;font:400 15.94px/15.94px 'Liberation Sans';color:#323232;letter-spacing:-0.300px;transform:scaleX(0.9155);transform-origin:0 0;">X-AXIS SORT ASCENDING</span>
<span style="left:377.95px;top:597.90px;font:400 15.07px/15.07px 'Liberation Sans';color:#666;letter-spacing:-0.300px;transform:scaleX(0.9548);transform-origin:0 0;">METRICS</span>
<span style="left:420.10px;top:632.90px;font:400 16.5px/16.5px 'Liberation Serif';color:#323232;letter-spacing:0.000px;font-style:italic">f</span>
<span style="left:426.30px;top:634.70px;font:400 12.2px/12.2px 'Liberation Sans';color:#323232;letter-spacing:0.000px;">(x)</span>
<span style="left:451.80px;top:632.30px;font:400 15.8px/15.8px 'Liberation Sans';color:#323232;letter-spacing:-0.300px;transform:scaleX(0.9661);transform-origin:0 0;">SUM(valor)</span>
<span style="left:418.20px;top:664.70px;font:400 15.07px/15.07px 'Liberation Sans';color:#b2b2b2;letter-spacing:0.161px;">Drop columns/metrics here or click</span>
<span style="left:377.92px;top:716.80px;font:400 14.93px/14.93px 'Liberation Sans';color:#666;letter-spacing:-0.300px;transform:scaleX(0.9828);transform-origin:0 0;">DIMENSIONS</span>
<span style="left:420.10px;top:751.00px;font:400 16.5px/16.5px 'Liberation Serif';color:#323232;letter-spacing:0.000px;font-style:italic">f</span>
<span style="left:426.30px;top:752.80px;font:400 12.2px/12.2px 'Liberation Sans';color:#323232;letter-spacing:0.000px;">(x)</span>
<span style="left:450.60px;top:749.80px;font:400 15.66px/15.66px 'Liberation Sans';color:#323232;letter-spacing:-0.064px;">numero contrato</span>
<span style="left:418.20px;top:782.70px;font:400 15.07px/15.07px 'Liberation Sans';color:#b2b2b2;letter-spacing:0.097px;">Drop columns here or click</span>
<span style="left:378.70px;top:834.00px;font:400 15.65px/15.65px 'Liberation Sans';color:#666;letter-spacing:-0.300px;transform:scaleX(0.9396);transform-origin:0 0;">CONTRIBUTION MODE</span>
<span style="left:392.30px;top:867.10px;font:400 16.96px/16.96px 'Liberation Sans';color:#323232;letter-spacing:0.600px;transform:scaleX(1.0031);transform-origin:0 0;">None</span>
<span style="left:495.50px;top:919.00px;font:700 15.94px/15.94px 'Liberation Sans';color:#1a85a0;letter-spacing:-0.300px;transform:scaleX(0.9094);transform-origin:0 0;">UPDATE CHART</span>
<span style="left:1686.75px;top:169.50px;font:400 14.86px/14.86px 'Liberation Sans';color:#fff;letter-spacing:0.108px;">10 rows</span>
<span style="left:1774.75px;top:170.50px;font:400 14px/14px 'Liberation Mono';color:#fff;letter-spacing:0.174px;">00:00:00.31</span>
<span style="left:823.40px;top:217.50px;font:400 15.36px/15.36px 'Liberation Sans';color:#464646;letter-spacing:-0.223px;">00002/2022</span>
<span style="left:950.95px;top:217.50px;font:400 15.36px/15.36px 'Liberation Sans';color:#464646;letter-spacing:-0.223px;">00001/2022</span>
<span style="left:1078.50px;top:217.50px;font:400 15.36px/15.36px 'Liberation Sans';color:#464646;letter-spacing:-0.223px;">00008/2022</span>
<span style="left:1206.05px;top:217.50px;font:400 15.36px/15.36px 'Liberation Sans';color:#464646;letter-spacing:-0.223px;">00013/2023</span>
<span style="left:1333.60px;top:217.50px;font:400 15.36px/15.36px 'Liberation Sans';color:#464646;letter-spacing:-0.223px;">00002/2019</span>
<span style="left:1461.15px;top:217.50px;font:400 15.36px/15.36px 'Liberation Sans';color:#464646;letter-spacing:-0.096px;">00011/2023</span>
<span style="left:1588.70px;top:217.50px;font:400 15.36px/15.36px 'Liberation Sans';color:#464646;letter-spacing:-0.223px;">00008/2019</span>
<span style="left:1747.30px;top:217.50px;font:400 15.36px/15.36px 'Liberation Sans';color:#464646;letter-spacing:0.195px;">1/2</span>
<span style="left:1811.50px;top:217.60px;font:400 15.36px/15.36px 'Liberation Sans';color:#666;letter-spacing:-0.300px;transform:scaleX(0.9653);transform-origin:0 0;">All</span>
<span style="left:1849.02px;top:217.60px;font:400 15.36px/15.36px 'Liberation Sans';color:#666;letter-spacing:-0.300px;transform:scaleX(0.9761);transform-origin:0 0;">Inv</span>
<span style="left:852.00px;top:800.00px;font:400 14.2px/14.2px 'Liberation Sans';color:#6e7079;letter-spacing:0.000px;">0</span>
<span style="left:833.22px;top:708.00px;font:400 14.2px/14.2px 'Liberation Sans';color:#6e7079;letter-spacing:0.000px;">20M</span>
<span style="left:833.22px;top:616.00px;font:400 14.2px/14.2px 'Liberation Sans';color:#6e7079;letter-spacing:0.000px;">40M</span>
<span style="left:833.22px;top:524.00px;font:400 14.2px/14.2px 'Liberation Sans';color:#6e7079;letter-spacing:0.000px;">60M</span>
<span style="left:833.22px;top:432.00px;font:400 14.2px/14.2px 'Liberation Sans';color:#6e7079;letter-spacing:0.000px;">80M</span>
<span style="left:825.33px;top:340.00px;font:400 14.2px/14.2px 'Liberation Sans';color:#6e7079;letter-spacing:0.000px;">100M</span>
<span style="left:825.33px;top:248.00px;font:400 14.2px/14.2px 'Liberation Sans';color:#6e7079;letter-spacing:0.000px;">120M</span>
<span style="left:881.34px;top:816.90px;font:400 14.2px/14.2px 'Liberation Sans';color:#6e7079;letter-spacing:0.250px;">00001/2022</span>
<span style="left:1078.84px;top:816.90px;font:400 14.2px/14.2px 'Liberation Sans';color:#6e7079;letter-spacing:0.250px;">00002/2022</span>
<span style="left:1276.34px;top:816.90px;font:400 14.2px/14.2px 'Liberation Sans';color:#6e7079;letter-spacing:0.250px;">00008/2022</span>
<span style="left:1473.84px;top:816.90px;font:400 14.2px/14.2px 'Liberation Sans';color:#6e7079;letter-spacing:0.250px;">00012/2017</span>
<span style="left:1671.34px;top:816.90px;font:400 14.2px/14.2px 'Liberation Sans';color:#6e7079;letter-spacing:0.250px;">00013/2023</span>
<span style="left:900.10px;top:706.84px;font:400 14.6px/14.6px 'Liberation Sans';color:#464646;letter-spacing:0.100px;">17.6M</span>
<span style="left:998.85px;top:726.62px;font:400 14.6px/14.6px 'Liberation Sans';color:#464646;letter-spacing:0.100px;">13.3M</span>
<span style="left:1099.68px;top:295.60px;font:400 14.6px/14.6px 'Liberation Sans';color:#464646;letter-spacing:0.100px;">107M</span>
<span style="left:1196.35px;top:738.12px;font:400 14.6px/14.6px 'Liberation Sans';color:#464646;letter-spacing:0.100px;">10.8M</span>
<span style="left:1295.10px;top:710.06px;font:400 14.6px/14.6px 'Liberation Sans';color:#464646;letter-spacing:0.100px;">16.9M</span>
<span style="left:1393.85px;top:728.46px;font:400 14.6px/14.6px 'Liberation Sans';color:#464646;letter-spacing:0.100px;">12.9M</span>
<span style="left:1493.10px;top:762.64px;font:400 14.6px/14.6px 'Liberation Sans';color:#464646;letter-spacing:0.100px;">5.47M</span>
<span style="left:1597.53px;top:741.80px;font:400 14.6px/14.6px 'Liberation Sans';color:#464646;letter-spacing:0.100px;">10M</span>
<span style="left:1690.10px;top:713.28px;font:400 14.6px/14.6px 'Liberation Sans';color:#464646;letter-spacing:0.100px;">16.2M</span>
<span style="left:1789.35px;top:745.80px;font:400 14.6px/14.6px 'Liberation Sans';color:#464646;letter-spacing:0.100px;">9.13M</span>
<span style="left:762.58px;top:891.90px;font:400 15.51px/15.51px 'Liberation Sans';color:#323232;letter-spacing:-0.300px;transform:scaleX(0.9181);transform-origin:0 0;">RESULTS</span>
<span style="left:864.60px;top:891.90px;font:400 15.51px/15.51px 'Liberation Sans';color:#323232;letter-spacing:-0.300px;transform:scaleX(0.9228);transform-origin:0 0;">SAMPLES</span>
<div style="left:0px;top:950px;width:358px;height:15px;background:#fff"></div>
</div></body></html>
